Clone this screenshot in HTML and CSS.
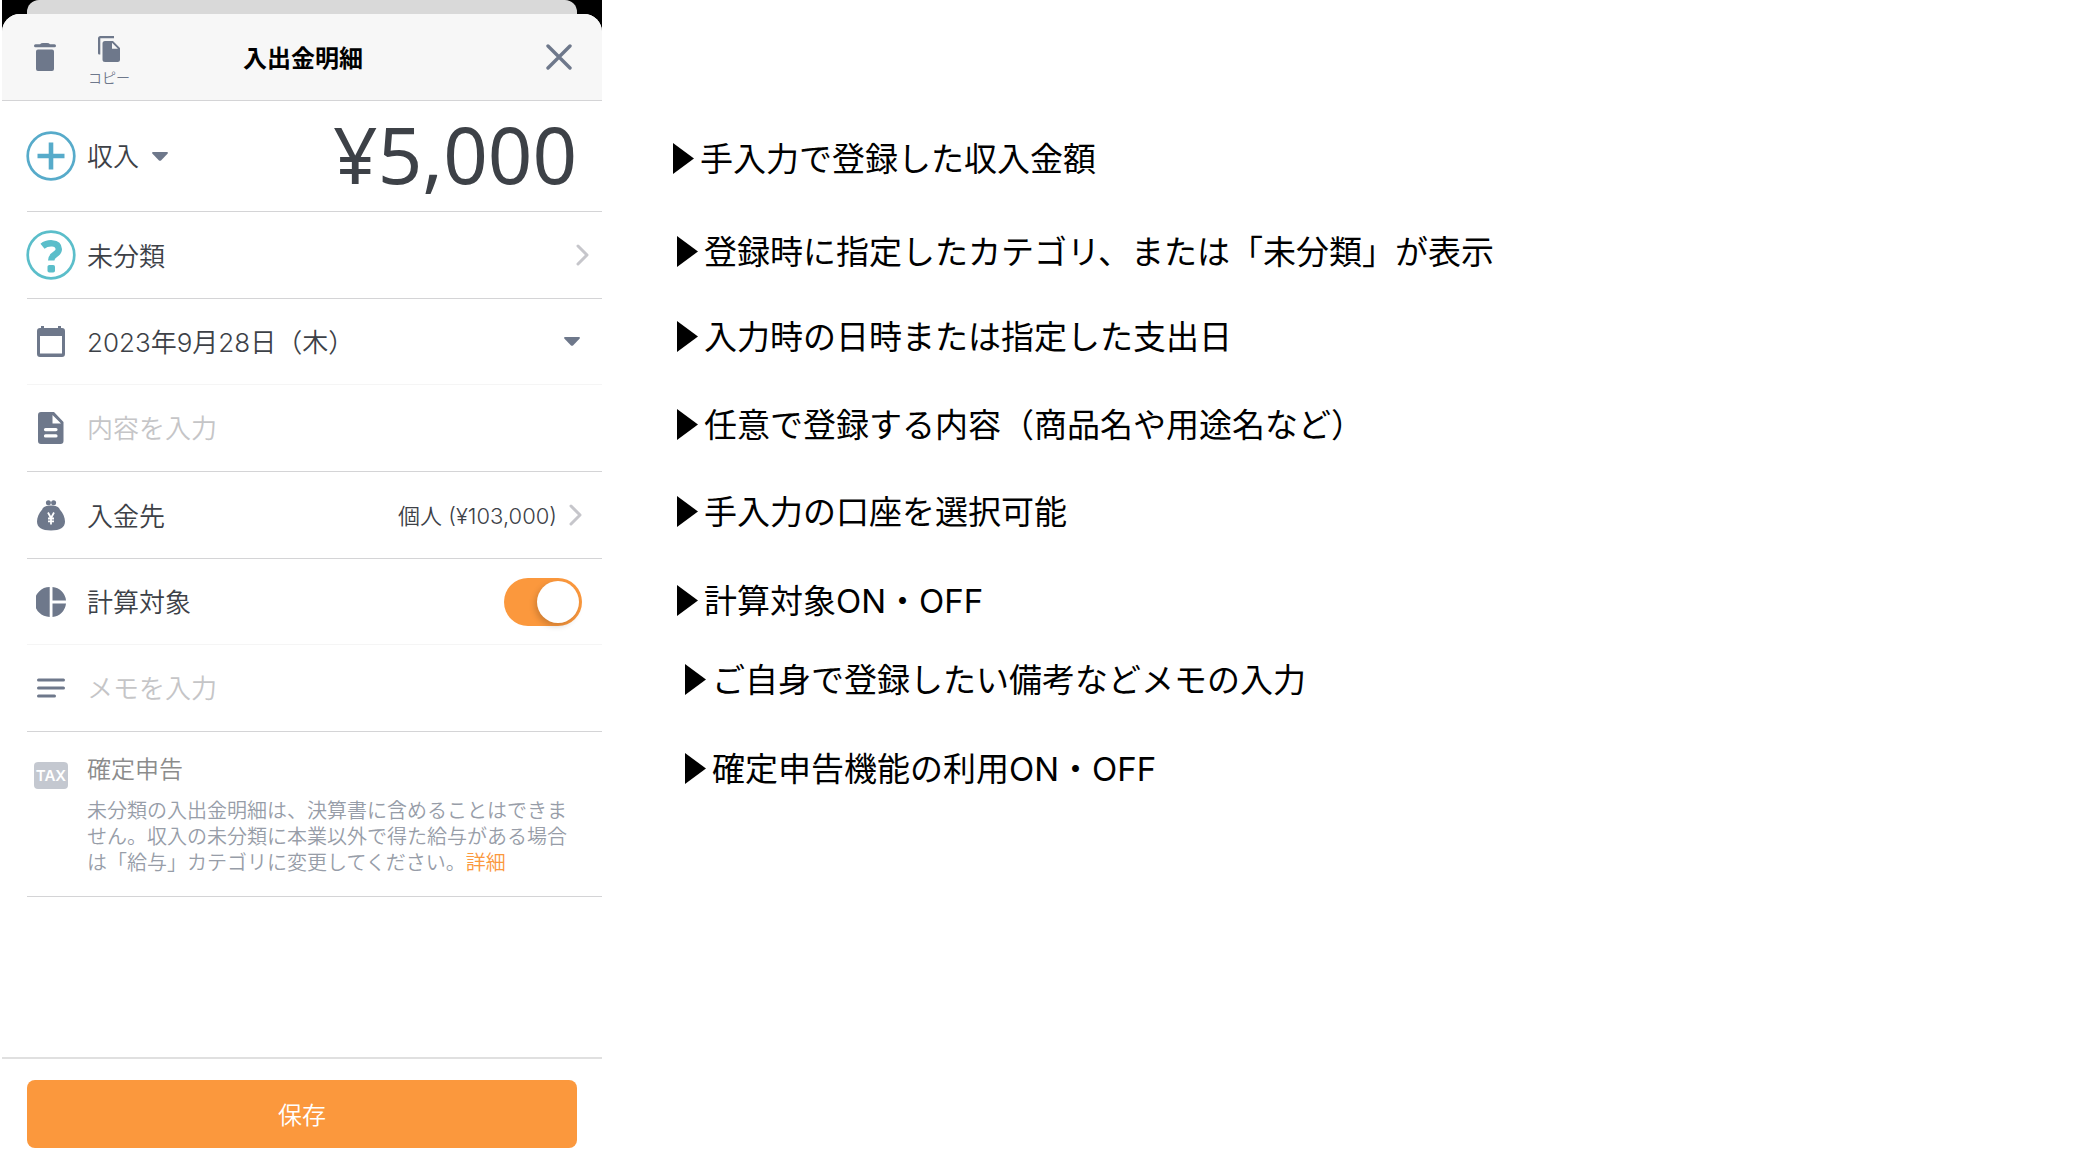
FILE: index.html
```html
<!DOCTYPE html>
<html lang="ja">
<head>
<meta charset="utf-8">
<meta name="viewport" content="width=device-width, initial-scale=1">
<title>入出金明細</title>
<link rel="stylesheet" href="styles.css">
</head>
<body>
<div class="page">
  <main class="phone">
    <div class="behind"></div>
    <form class="sheet">
      <header class="bar">
        <div class="tools">
          <button type="button" class="tool" aria-label="削除">
            <svg width="22" height="28" viewBox="0 0 22 28" fill="currentColor"><path d="M6 1.300Q7 0 9 0h4q2 0 3 1.300h4.500a1.400 1.400 0 0 1 0 3h-19a1.400 1.400 0 0 1 0-3zM4 6.500h14a2 2 0 0 1 2 2V26a2 2 0 0 1-2 2H4a2 2 0 0 1-2-2V8.500a2 2 0 0 1 2-2z"/></svg>
          </button>
          <button type="button" class="tool copy">
            <svg width="22" height="26" viewBox="0 0 22 26" fill="currentColor"><path d="M0 2.500A2.500 2.500 0 0 1 2.500 0H16v2.300H2.300V18.500H1.200A1.200 1.200 0 0 1 0 17.300z"/><path fill-rule="evenodd" d="M7 5h8l7 7v11.500a2.500 2.500 0 0 1-2.500 2.500H7a2.500 2.500 0 0 1-2.500-2.500v-16A2.500 2.500 0 0 1 7 5zm7 1.800v6h6z"/></svg>
            <span>コピー</span>
          </button>
        </div>
        <h1 class="title">入出金明細</h1>
        <button type="button" class="tool close" aria-label="閉じる">
          <svg width="26" height="26" viewBox="0 0 26 26" fill="none" stroke="currentColor" stroke-width="3.400" stroke-linecap="round"><path d="M2 2l22 22M24 2L2 24"/></svg>
        </button>
      </header>

      <div class="rows">
        <div class="row row-amount">
          <span class="icon icon-plus">
            <svg width="50" height="50" viewBox="0 0 50 50" fill="none" stroke="currentColor"><circle cx="25" cy="25" r="23.300" stroke-width="2.700"/><path d="M25 11.500v27M11.500 25h27" stroke-width="4.600"/></svg>
          </span>
          <label class="kind">
            <select class="select" aria-label="収支区分"><option>収入</option></select>
            <svg class="caret" width="16" height="9" viewBox="0 0 16 9" fill="currentColor"><path d="M1 0h14q1.500.5.5 1.700L9 8.400q-1 .9-2 0L.5 1.700Q-.5.5 1 0z"/></svg>
          </label>
          <input class="amount" type="text" inputmode="numeric" aria-label="金額" value="¥5,000">
        </div>

        <button type="button" class="row row-category">
          <span class="icon icon-question">
            <svg width="50" height="50" viewBox="0 0 50 50" fill="none" stroke="currentColor"><circle cx="25" cy="25" r="23.300" stroke-width="2.700"/><path d="M16.500 16.200C21 12.500 32.500 11.300 32.800 19.200C33 25 25.200 23.600 25.200 30.500" stroke-width="6.400"/><rect x="21.500" y="35" width="7.500" height="7.500" rx="1.800" fill="currentColor" stroke="none"/></svg>
          </span>
          <span class="label">未分類</span>
          <svg class="chevron" width="13" height="22" viewBox="0 0 13 22" fill="none" stroke="currentColor" stroke-width="3" stroke-linecap="round" stroke-linejoin="round"><path d="M2 2l9 9-9 9"/></svg>
        </button>

        <button type="button" class="row row-soft">
          <span class="icon">
            <svg width="28" height="31" viewBox="0 0 28 31" fill="currentColor"><path fill-rule="evenodd" d="M4 0h3v2h14V0h3v2h1a3 3 0 0 1 3 3v23a3 3 0 0 1-3 3H3a3 3 0 0 1-3-3V5a3 3 0 0 1 3-3h1zM3 10v17.500h22V10z"/></svg>
          </span>
          <span class="label">2023年9月28日（木）</span>
          <svg class="caret" width="16" height="9" viewBox="0 0 16 9" fill="currentColor"><path d="M1 0h14q1.500.5.5 1.700L9 8.400q-1 .9-2 0L.5 1.700Q-.5.5 1 0z"/></svg>
        </button>

        <label class="row">
          <span class="icon">
            <svg width="26" height="32" viewBox="0 0 26 32" fill="currentColor"><path fill-rule="evenodd" d="M3 0h13l9.500 10v19a3 3 0 0 1-3 3H3a3 3 0 0 1-3-3V3a3 3 0 0 1 3-3zm11.500 3v8.500H23zM7.500 16a1.500 1.500 0 0 0 0 3.200h10.500a1.500 1.500 0 0 0 0-3.200zm0 6.300a1.500 1.500 0 0 0 0 3.200h10.500a1.500 1.500 0 0 0 0-3.200z"/></svg>
          </span>
          <input class="field" type="text" aria-label="内容" placeholder="内容を入力">
        </label>

        <button type="button" class="row">
          <span class="icon">
            <svg width="28" height="31" viewBox="0 0 28 31" fill="currentColor"><circle cx="11.400" cy="2.700" r="2.500"/><circle cx="16.600" cy="2.700" r="2.500"/><path d="M14 5.500c4.500 0 8 1.400 8.800 4C26 13 28 17.500 28 21.500c0 6-5 9-14 9s-14-3-14-9c0-4 2-8.500 5.200-12 .8-2.600 4.300-4 8.800-4z"/><path d="M11 12.500l3 5.500 3-5.500M14 18v6.500M11 18.500h6M11 21.300h6" fill="none" stroke="#fff" stroke-width="1.800"/></svg>
          </span>
          <span class="label">入金先</span>
          <span class="value">個人 (¥103,000)</span>
          <svg class="chevron" width="13" height="22" viewBox="0 0 13 22" fill="none" stroke="currentColor" stroke-width="3" stroke-linecap="round" stroke-linejoin="round"><path d="M2 2l9 9-9 9"/></svg>
        </button>

        <label class="row row-soft">
          <span class="icon">
            <svg width="30" height="30" viewBox="0 0 30 30" fill="currentColor"><path d="M13.700 0v30a15 15 0 0 1 0-30zM16.500 0A15 15 0 0 1 30 13.500H16.500zM16.500 16.500H30A15 15 0 0 1 16.500 30z"/></svg>
          </span>
          <span class="label">計算対象</span>
          <input class="switch" type="checkbox" role="switch" checked>
        </label>

        <label class="row">
          <span class="icon">
            <svg width="28" height="20" viewBox="0 0 28 20" fill="none" stroke="currentColor" stroke-width="3" stroke-linecap="round"><path d="M1.500 2h25M1.500 10h25M1.500 18h16"/></svg>
          </span>
          <input class="field" type="text" aria-label="メモ" placeholder="メモを入力">
        </label>

        <section class="row row-tax">
          <span class="icon"><span class="tax-badge">TAX</span></span>
          <div class="tax">
            <h2 class="tax-title">確定申告</h2>
            <p class="tax-text">未分類の入出金明細は、決算書に含めることはできません。収入の未分類に本業以外で得た給与がある場合は「給与」カテゴリに変更してください。<a class="link" href="#detail">詳細</a></p>
          </div>
        </section>
      </div>

      <footer class="footer">
        <button type="submit" class="save">保存</button>
      </footer>
    </form>
  </main>

  <ul class="notes">
    <li class="note">手入力で登録した収入金額</li>
    <li class="note near">登録時に指定したカテゴリ、または「未分類」が表示</li>
    <li class="note near">入力時の日時または指定した支出日</li>
    <li class="note near">任意で登録する内容（商品名や用途名など）</li>
    <li class="note near">手入力の口座を選択可能</li>
    <li class="note near">計算対象ON・OFF</li>
    <li class="note far">ご自身で登録したい備考などメモの入力</li>
    <li class="note far">確定申告機能の利用ON・OFF</li>
  </ul>
</div>
</body>
</html>
```

FILE: styles.css
```css
:root {
  --ink: #3d4147;
  --icon: #6e788b;
  --orange: #fb983d;
  --line: #d4d4d6;
}

* {
  box-sizing: border-box;
}

body {
  margin: 0;
  background: #fff;
  color: var(--ink);
  font-family: Inter, "Noto Sans CJK JP", sans-serif;
  font-size: 26px;
  font-weight: 350;
}

h1, h2, p, ul {
  margin: 0;
  padding: 0;
}

button, input, select {
  margin: 0;
  padding: 0;
  border: 0;
  background: none;
  color: inherit;
  font: inherit;
}

button {
  cursor: pointer;
}

svg {
  display: block;
  flex: none;
}

.page {
  display: grid;
  grid-template-columns: minmax(360px, 600px) 1fr;
  min-height: 100vh;
  padding-left: 2px;
}

/* Phone screen */
.phone {
  display: flex;
  flex-direction: column;
  background: linear-gradient(#000 60px, #fff 60px);
}

.behind {
  height: 14px;
  margin: 0 25px;
  border-radius: 12px 12px 0 0;
  background: #d9d9d9;
}

.sheet {
  display: flex;
  flex: 1;
  flex-direction: column;
  border-radius: 18px 18px 0 0;
  background: #fff;
  overflow: hidden;
}

.bar {
  display: grid;
  grid-template-columns: 1fr auto 1fr;
  align-items: center;
  height: 87px;
  padding: 0 30px 0 32px;
  border-bottom: 1px solid var(--line);
  background: #f7f7f7;
}

.tools {
  display: flex;
  align-items: center;
  gap: 32px;
}

.tool {
  color: var(--icon);
}

.copy {
  display: flex;
  flex-direction: column;
  align-items: center;
  gap: 7px;
  padding-top: 8px;
  font-size: 14px;
  line-height: 18px;
}

.title {
  padding-bottom: 2px;
  color: #000;
  font-size: 24px;
  font-weight: 700;
}

.close {
  justify-self: end;
}

/* Detail rows */
.rows {
  padding-left: 25px;
}

.row {
  display: flex;
  align-items: center;
  width: 100%;
  height: 87px;
  padding-right: 20px;
  border-bottom: 1px solid var(--line);
  text-align: left;
}

.row-soft {
  height: 86px;
  border-bottom-color: #f5f5f5;
}

.row-amount {
  height: 111px;
  padding-right: 25px;
}

.row-category {
  padding-right: 13px;
}

.icon {
  display: flex;
  flex: none;
  justify-content: center;
  width: 48px;
  margin-right: 12px;
  color: var(--icon);
}

.icon-plus {
  color: #57abca;
}

.icon-question {
  color: #5bbeca;
}

.label {
  flex: 1;
  padding-bottom: 2px;
}

.kind {
  display: flex;
  align-items: center;
  gap: 12px;
}

.select {
  appearance: none;
}

.caret {
  color: var(--icon);
}

.row > .caret {
  margin-right: 2px;
}

.chevron {
  color: #c6c6cb;
}

.amount {
  flex: 1;
  min-width: 0;
  padding-bottom: 5px;
  font-family: "Noto Sans", sans-serif;
  font-size: 78px;
  font-weight: 400;
  line-height: 100px;
  text-align: right;
}

.value {
  margin-right: 12px;
  padding-bottom: 2px;
  font-size: 22px;
}

.field {
  flex: 1;
  min-width: 0;
}

.field::placeholder {
  color: #c5c5c7;
  opacity: 1;
}

.switch {
  flex: none;
  width: 78px;
  height: 48px;
  border-radius: 24px;
  appearance: none;
  background: #d9d9d9;
}

.switch::before {
  content: "";
  display: block;
  width: 42px;
  height: 42px;
  margin: 3px;
  border-radius: 50%;
  background: #fff;
  box-shadow: -2px 3px 6px rgba(0, 0, 0, 0.18);
}

.switch:checked {
  background: var(--orange);
}

.switch:checked::before {
  margin-left: 33px;
}

.row-tax {
  align-items: flex-start;
  height: auto;
  padding: 22px 20px 20px 0;
}

.row-tax .icon {
  align-items: center;
  height: 42px;
}

.tax-badge {
  width: 34px;
  border-radius: 4px;
  background: #c4c8d0;
  color: #fff;
  font-size: 15px;
  font-weight: 600;
  line-height: 27px;
  text-align: center;
}

.tax-title {
  margin-bottom: 12px;
  color: #8c8c8c;
  font-size: 24px;
  font-weight: 350;
  line-height: 32px;
}

.tax-text {
  color: #979da8;
  font-size: 20px;
  line-height: 26px;
}

.link {
  display: inline-block;
  color: var(--orange);
  text-decoration: none;
}

.footer {
  margin-top: auto;
  padding: 21px 25px 16px;
  border-top: 2px solid #e0e0e0;
}

.save {
  width: 100%;
  height: 68px;
  padding-bottom: 2px;
  border-radius: 8px;
  background: var(--orange);
  color: #fff;
  font-size: 24px;
}

/* Explanations beside the screen */
.notes {
  display: grid;
  grid-template-rows: 93px 85px 88px 87px 89px 79px 89px 48px;
  align-content: start;
  padding: 135px 24px 0 71px;
  color: #000;
  font-size: 33px;
  font-weight: 400;
  line-height: 48px;
  list-style: none;
}

.note {
  display: flex;
  align-items: flex-start;
  gap: 6px;
}

.note::before {
  content: "";
  flex: none;
  width: 21px;
  height: 31px;
  margin-top: 8px;
  background: #000;
  clip-path: polygon(0 0, 100% 50%, 0 100%);
}

.near {
  padding-left: 4px;
}

.far {
  padding-left: 12px;
}
```
